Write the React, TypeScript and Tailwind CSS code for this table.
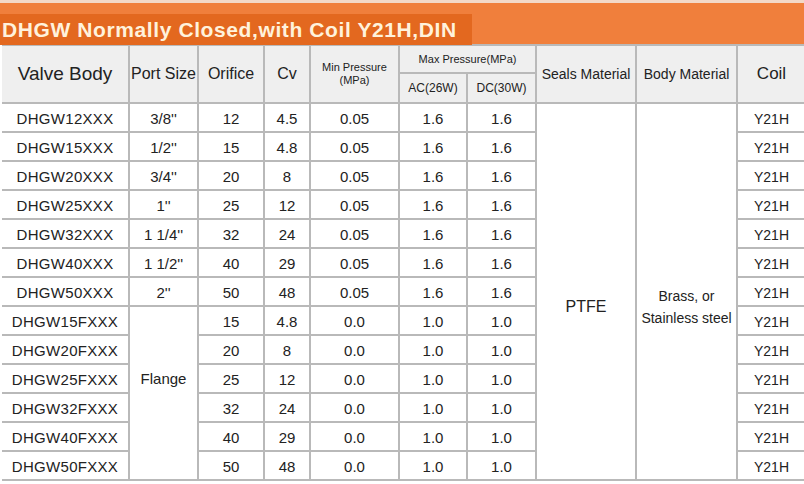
const rows = [
  ['DHGW12XXX', '3/8\'\'', '12', '4.5', '0.05', '1.6', '1.6'],
  ['DHGW15XXX', '1/2\'\'', '15', '4.8', '0.05', '1.6', '1.6'],
  ['DHGW20XXX', '3/4\'\'', '20', '8', '0.05', '1.6', '1.6'],
  ['DHGW25XXX', '1\'\'', '25', '12', '0.05', '1.6', '1.6'],
  ['DHGW32XXX', '1 1/4\'\'', '32', '24', '0.05', '1.6', '1.6'],
  ['DHGW40XXX', '1 1/2\'\'', '40', '29', '0.05', '1.6', '1.6'],
  ['DHGW50XXX', '2\'\'', '50', '48', '0.05', '1.6', '1.6'],
  ['DHGW15FXXX', '', '15', '4.8', '0.0', '1.0', '1.0'],
  ['DHGW20FXXX', '', '20', '8', '0.0', '1.0', '1.0'],
  ['DHGW25FXXX', '', '25', '12', '0.0', '1.0', '1.0'],
  ['DHGW32FXXX', '', '32', '24', '0.0', '1.0', '1.0'],
  ['DHGW40FXXX', '', '40', '29', '0.0', '1.0', '1.0'],
  ['DHGW50FXXX', '', '50', '48', '0.0', '1.0', '1.0'],
]

const cell = 'border-2 border-[#b9b9b9] text-center align-middle p-0'
const head = `${cell} bg-[#efefef] text-[#222]`
const data = `${cell} bg-white pt-[3px]`

export default function App() {
  return (
    <div className="w-[804px] h-[484px] bg-white overflow-hidden font-['Liberation_Sans',Arial,sans-serif] text-[#222]">
      {/* Orange title band */}
      <div className="h-[45px] bg-[#f07f3c] border-t-[3px] border-[#f3d9c8] flex flex-col justify-end">
        <div className="w-[472px] h-[31px] bg-[#e3681f] flex items-center pl-[2px]">
          <span className="text-[21px] font-bold text-[#fff2dc] tracking-[0.6px] leading-none">
            DHGW Normally Closed,with Coil Y21H,DIN
          </span>
        </div>
      </div>

      <table className="table-fixed border-collapse w-[803px] ml-[2px] -mt-px">
        <colgroup>
          <col className="w-[127px]" />
          <col className="w-[69px]" />
          <col className="w-[66px]" />
          <col className="w-[46px]" />
          <col className="w-[89px]" />
          <col className="w-[68px]" />
          <col className="w-[69px]" />
          <col className="w-[100px]" />
          <col className="w-[101px]" />
          <col className="w-[68px]" />
        </colgroup>
        <thead>
          <tr className="h-[28px]">
            <th rowSpan={2} className={`${head} border-l-0 text-[19px] font-normal`}>Valve Body</th>
            <th rowSpan={2} className={`${head} text-[16px] font-normal whitespace-nowrap`}>Port Size</th>
            <th rowSpan={2} className={`${head} text-[16px] font-normal`}>Orifice</th>
            <th rowSpan={2} className={`${head} text-[16px] font-normal`}>Cv</th>
            <th rowSpan={2} className={`${head} text-[11px] font-normal leading-[13px]`}>
              Min Pressure
              <br />
              (MPa)
            </th>
            <th colSpan={2} className={`${head} text-[11px] font-normal`}>Max Pressure(MPa)</th>
            <th rowSpan={2} className={`${head} text-[14px] font-normal whitespace-nowrap`}>Seals Material</th>
            <th rowSpan={2} className={`${head} text-[14px] font-normal whitespace-nowrap`}>Body Material</th>
            <th rowSpan={2} className={`${head} border-r-0 text-[17px] font-normal`}>Coil</th>
          </tr>
          <tr className="h-[30px]">
            <th className={`${head} text-[12px] font-normal`}>AC(26W)</th>
            <th className={`${head} text-[12px] font-normal`}>DC(30W)</th>
          </tr>
        </thead>
        <tbody>
          {rows.map((r, i) => (
            <tr key={r[0]} className="h-[29px] text-[15px]">
              <td className={`${data} bg-[#efefef] border-l-0 tracking-[0.3px]`}>{r[0]}</td>
              {i < 7 && <td className={data}>{r[1]}</td>}
              {i === 7 && (
                <td rowSpan={6} className={`${cell} bg-white pb-[28px]`}>Flange</td>
              )}
              <td className={data}>{r[2]}</td>
              <td className={data}>{r[3]}</td>
              <td className={data}>{r[4]}</td>
              <td className={data}>{r[5]}</td>
              <td className={data}>{r[6]}</td>
              {i === 0 && (
                <>
                  <td rowSpan={13} className={`${cell} bg-white text-[16px] pt-[30px]`}>PTFE</td>
                  <td rowSpan={13} className={`${cell} bg-white text-[14px] leading-[22px] pt-[30px] whitespace-nowrap`}>
                    Brass, or
                    <br />
                    Stainless steel
                  </td>
                </>
              )}
              <td className={`${data} border-r-0 text-[14px]`}>Y21H</td>
            </tr>
          ))}
        </tbody>
      </table>
    </div>
  )
}
